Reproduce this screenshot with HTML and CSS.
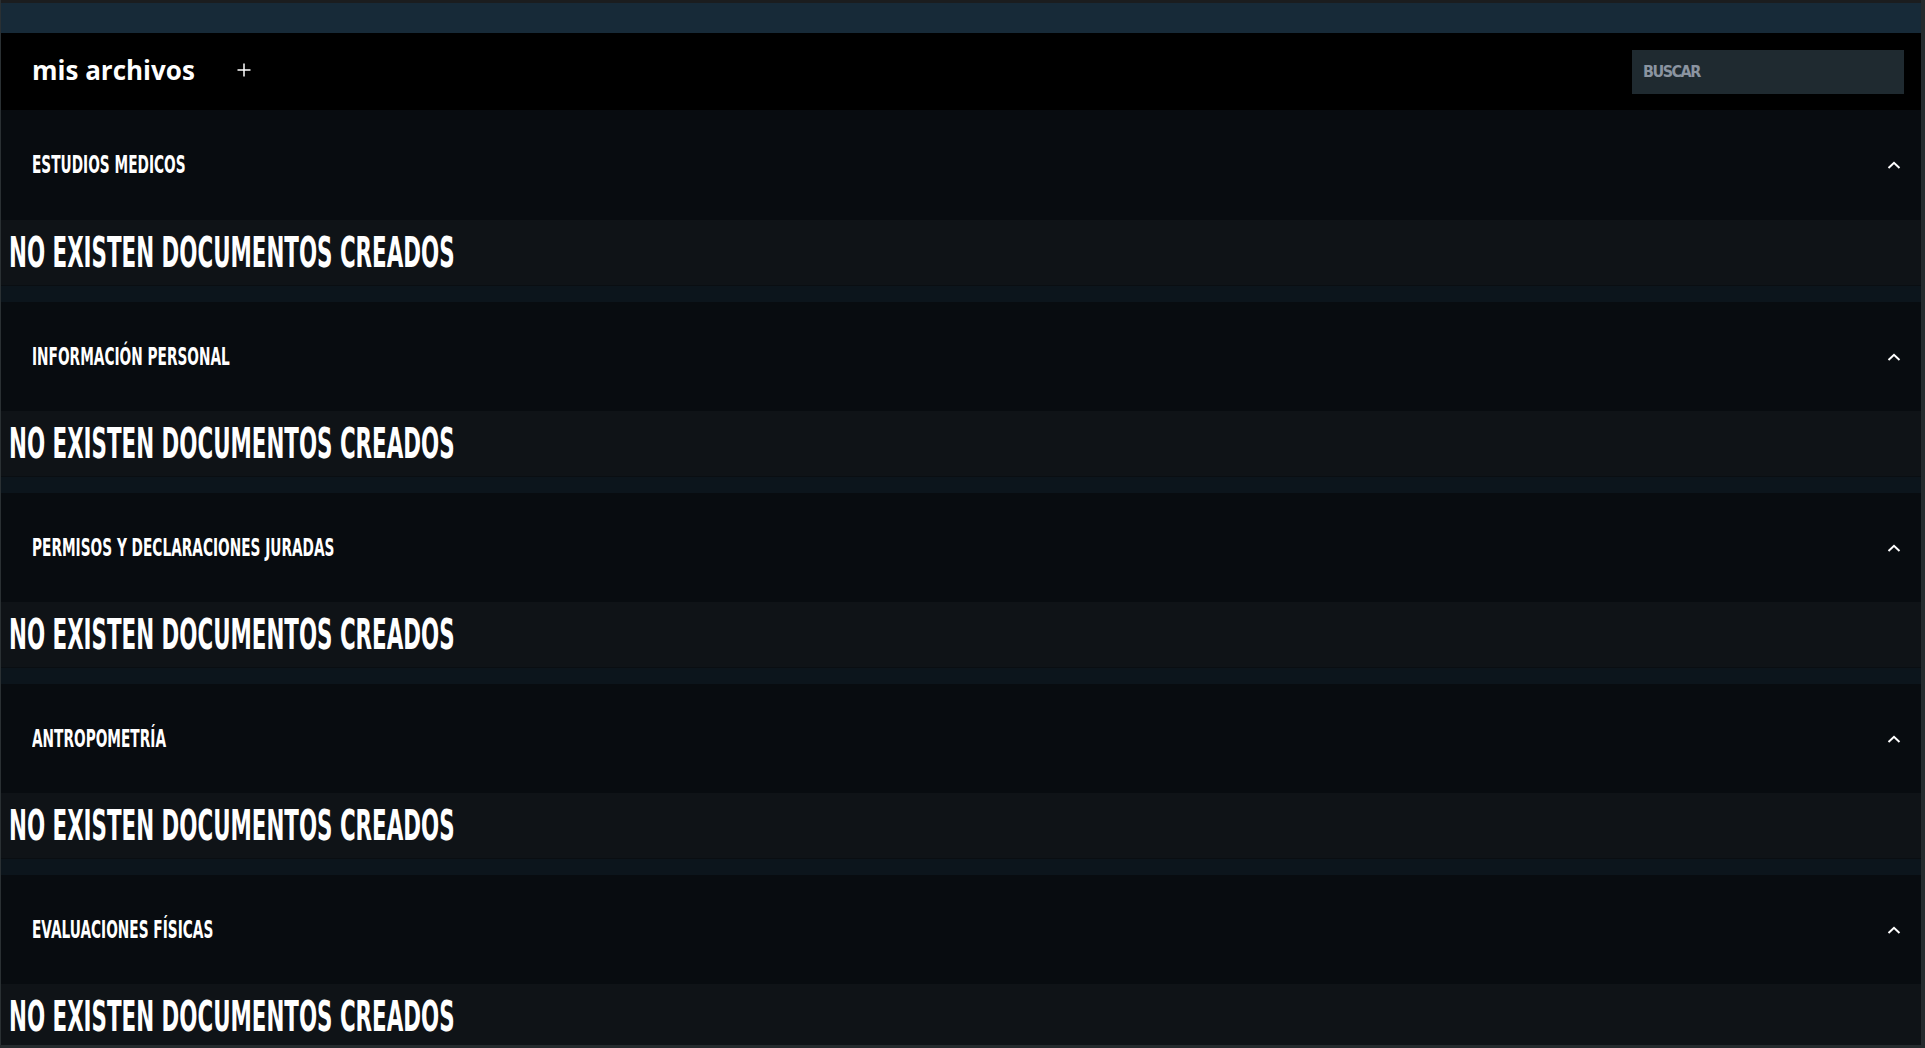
FILE: index.html
```html
<!DOCTYPE html>
<html lang="es">
<head>
    <meta charset="UTF-8">
    <meta name="viewport" content="width=device-width, initial-scale=1.0">
    <title>mis archivos</title>
    <link rel="stylesheet" href="styles.css">
</head>
<body>
    <div class="window">
        <div class="topbar"></div>
        <header class="header">
            <div class="header-left">
                <h1 class="title">mis archivos</h1>
                <button class="add-btn" title="Agregar">
                    <svg width="14" height="14" viewBox="0 0 14 14"><path d="M7 0.5V13.5M0.5 7H13.5" stroke="#fff" stroke-width="1.5" fill="none"/></svg>
                </button>
            </div>
            <input class="search" type="text" placeholder="BUSCAR">
        </header>

        <section class="folder">
            <div class="folder-head">
                <span class="folder-name">Estudios medicos</span>
                <svg class="chevron" width="14" height="8" viewBox="0 0 14 8"><path d="M1.5 7L7 1.8L12.5 7" stroke="#fff" stroke-width="2" fill="none"/></svg>
            </div>
            <div class="folder-body"><span class="empty">No existen documentos creados</span></div>
            <div class="folder-gap"></div>
        </section>

        <section class="folder">
            <div class="folder-head">
                <span class="folder-name">Información personal</span>
                <svg class="chevron" width="14" height="8" viewBox="0 0 14 8"><path d="M1.5 7L7 1.8L12.5 7" stroke="#fff" stroke-width="2" fill="none"/></svg>
            </div>
            <div class="folder-body"><span class="empty">No existen documentos creados</span></div>
            <div class="folder-gap"></div>
        </section>

        <section class="folder">
            <div class="folder-head">
                <span class="folder-name">Permisos y declaraciones juradas</span>
                <svg class="chevron" width="14" height="8" viewBox="0 0 14 8"><path d="M1.5 7L7 1.8L12.5 7" stroke="#fff" stroke-width="2" fill="none"/></svg>
            </div>
            <div class="folder-body"><span class="empty">No existen documentos creados</span></div>
            <div class="folder-gap"></div>
        </section>

        <section class="folder">
            <div class="folder-head">
                <span class="folder-name">Antropometría</span>
                <svg class="chevron" width="14" height="8" viewBox="0 0 14 8"><path d="M1.5 7L7 1.8L12.5 7" stroke="#fff" stroke-width="2" fill="none"/></svg>
            </div>
            <div class="folder-body"><span class="empty">No existen documentos creados</span></div>
            <div class="folder-gap"></div>
        </section>

        <section class="folder">
            <div class="folder-head">
                <span class="folder-name">Evaluaciones físicas</span>
                <svg class="chevron" width="14" height="8" viewBox="0 0 14 8"><path d="M1.5 7L7 1.8L12.5 7" stroke="#fff" stroke-width="2" fill="none"/></svg>
            </div>
            <div class="folder-body"><span class="empty">No existen documentos creados</span></div>
            <div class="folder-gap"></div>
        </section>
    </div>
</body>
</html>
```

FILE: styles.css
```css
html, body {
    margin: 0;
    padding: 0;
    height: 100%;
    overflow: hidden;
    background-color: #252b2e;
}
.window {
    height: 1045px;
    margin-right: 4px;
    border-left: 1px solid #2a3033;
    background-color: #080c10;
    overflow: hidden;
    font-family: "DejaVu Sans Condensed", "DejaVu Sans", sans-serif;
    color: #fff;
}
.topbar {
    height: 3px;
    background-color: #1b1d1f;
    border-bottom: 30px solid #172a38;
}
.header {
    height: 77px;
    background-color: #000;
    display: flex;
    align-items: center;
    justify-content: space-between;
    padding: 0 17px 0 31px;
}
.header-left {
    display: flex;
    align-items: center;
}
.title {
    margin: 0 0 3px;
    font-family: "Open Sans", sans-serif;
    font-weight: 700;
    font-size: 26px;
    line-height: 1;
}
.add-btn {
    background: none;
    border: none;
    padding: 0;
    margin: 0 0 4px 42px;
    display: flex;
    cursor: pointer;
}
.search {
    width: 272px;
    height: 44px;
    box-sizing: border-box;
    border: none;
    outline: none;
    background-color: #1f2a30;
    padding: 0 11px;
    font-family: "DejaVu Sans Condensed", "DejaVu Sans", sans-serif;
    font-weight: bold;
    font-size: 16px;
    letter-spacing: -1.5px;
    color: #fff;
}
.search::placeholder {
    color: #8a94a0;
}
.folder-head {
    height: 109px;
    display: flex;
    align-items: center;
    justify-content: space-between;
    padding: 0 20px 0 31px;
}
.folder:first-of-type .folder-head {
    height: 110px;
}
.folder-name {
    display: inline-block;
    font-weight: bold;
    font-size: 24px;
    text-transform: uppercase;
    transform: scaleX(0.635);
    transform-origin: left center;
}
.folder-body {
    height: 65px;
    background-color: #0f1317;
    border-bottom: 1px solid #0a0e12;
    display: flex;
    align-items: center;
    padding-left: 8px;
}
.empty {
    display: inline-block;
    font-weight: bold;
    font-size: 42px;
    text-transform: uppercase;
    transform: scaleX(0.566);
    transform-origin: left center;
}
.folder-gap {
    height: 16px;
    background-color: #0c151c;
}
```
